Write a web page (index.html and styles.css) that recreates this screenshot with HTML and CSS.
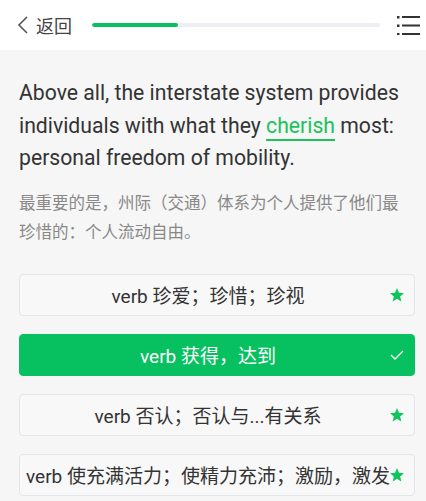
FILE: index.html
```html
<!DOCTYPE html>
<html lang="zh-CN">
<head>
<meta charset="utf-8">
<link rel="stylesheet" href="styles.css">
</head>
<body>
<div class="app">
  <header class="topbar">
    <div class="back">
      <svg class="chev" width="12" height="18" viewBox="0 0 12 18"><path d="M10 1 L2 9 L10 17" fill="none" stroke="#555" stroke-width="1.6"/></svg>
      <span class="back-text">返回</span>
    </div>
    <div class="progress"><div class="progress-fill" style="width:30%"></div></div>
    <svg class="menu" width="24" height="20" viewBox="0 0 24 20">
      <rect x="0" y="1" width="2.5" height="2.5" fill="#333"/>
      <rect x="5" y="1" width="18" height="2" fill="#333"/>
      <rect x="0" y="9.5" width="2.5" height="2.5" fill="#333"/>
      <rect x="5" y="9.5" width="18" height="2" fill="#333"/>
      <rect x="0" y="18" width="2.5" height="2.5" fill="#333"/>
      <rect x="5" y="18" width="18" height="2" fill="#333"/>
    </svg>
  </header>
  <main class="content">
    <p class="sentence">Above all, the interstate system provides individuals with what they <span class="hl">cherish</span> most: personal freedom of mobility.</p>
    <p class="trans">最重要的是，州际（交通）体系为个人提供了他们最珍惜的：个人流动自由。</p>
    <div class="options">
      <div class="opt"><span class="opt-text">verb 珍爱；珍惜；珍视</span>
        <svg class="star" width="16" height="16" viewBox="0 0 24 24"><path d="M12 1.5 L14.9 8.6 L22.5 9.2 L16.7 14.2 L18.5 21.6 L12 17.6 L5.5 21.6 L7.3 14.2 L1.5 9.2 L9.1 8.6 Z" fill="#0ec45c"/></svg>
      </div>
      <div class="opt correct"><span class="opt-text">verb 获得，达到</span>
        <svg class="check" width="14" height="10" viewBox="0 0 14 10"><path d="M1 5 L5 9 L13 1" fill="none" stroke="#fff" stroke-width="1.3"/></svg>
      </div>
      <div class="opt"><span class="opt-text">verb 否认；否认与...有关系</span>
        <svg class="star" width="16" height="16" viewBox="0 0 24 24"><path d="M12 1.5 L14.9 8.6 L22.5 9.2 L16.7 14.2 L18.5 21.6 L12 17.6 L5.5 21.6 L7.3 14.2 L1.5 9.2 L9.1 8.6 Z" fill="#0ec45c"/></svg>
      </div>
      <div class="opt"><span class="opt-text">verb 使充满活力；使精力充沛；激励，激发</span>
        <svg class="star" width="16" height="16" viewBox="0 0 24 24"><path d="M12 1.5 L14.9 8.6 L22.5 9.2 L16.7 14.2 L18.5 21.6 L12 17.6 L5.5 21.6 L7.3 14.2 L1.5 9.2 L9.1 8.6 Z" fill="#0ec45c"/></svg>
      </div>
    </div>
  </main>
</div>
</body>
</html>
```
FILE: styles.css
```css
* { box-sizing: border-box; }
html, body { margin: 0; padding: 0; }
body {
  width: 426px;
  height: 501px;
  overflow: hidden;
  background: #f6f6f6;
  font-family: Roboto, "Noto Sans CJK SC", sans-serif;
  color: #333;
}
.topbar {
  height: 50px;
  background: #fff;
  display: flex;
  align-items: center;
  padding: 0 5px 0 17px;
}
.back {
  display: flex;
  align-items: center;
  gap: 7px;
}
.chev { display: block; }
.back-text {
  font-family: "Noto Sans CJK SC", sans-serif;
  font-size: 18px;
  color: #444;
  line-height: 1;
}
.progress {
  margin-left: 20px;
  width: 288px;
  height: 4px;
  border-radius: 2px;
  background: #eceef1;
  overflow: hidden;
}
.progress-fill {
  height: 100%;
  background: #07c160;
  border-radius: 2px;
}
.menu { margin-left: auto; display: block; }
.content {
  padding: 27px 11px 0 19px;
}
.sentence {
  margin: 0;
  font-size: 21.2px;
  line-height: 32.5px;
  color: #333;
}
.hl {
  color: #1cc25a;
  text-decoration: underline;
  text-decoration-thickness: 1.5px;
  text-underline-offset: 6px;
}
.trans {
  margin: 13px 0 0;
  padding-right: 8px;
  font-family: "Noto Sans CJK SC", sans-serif;
  font-size: 16.5px;
  line-height: 29px;
  color: #888;
}
.options {
  margin-top: 28px;
  display: flex;
  flex-direction: column;
  gap: 18px;
}
.opt {
  position: relative;
  height: 42px;
  border: 1px solid #e2e5ea;
  border-radius: 4px;
  background: #f8f8f8;
  display: flex;
  align-items: center;
  justify-content: center;
  padding-right: 18px;
}
.opt-text {
  font-size: 19px;
  color: #333;
  white-space: nowrap;
}
.star {
  position: absolute;
  right: 9px;
  top: 50%;
  transform: translateY(-50%);
  display: block;
}
.opt.correct {
  background: #07c160;
  border-color: #07c160;
}
.opt.correct .opt-text { color: #fff; }
.check {
  position: absolute;
  right: 10px;
  top: 50%;
  transform: translateY(-50%);
}
```
